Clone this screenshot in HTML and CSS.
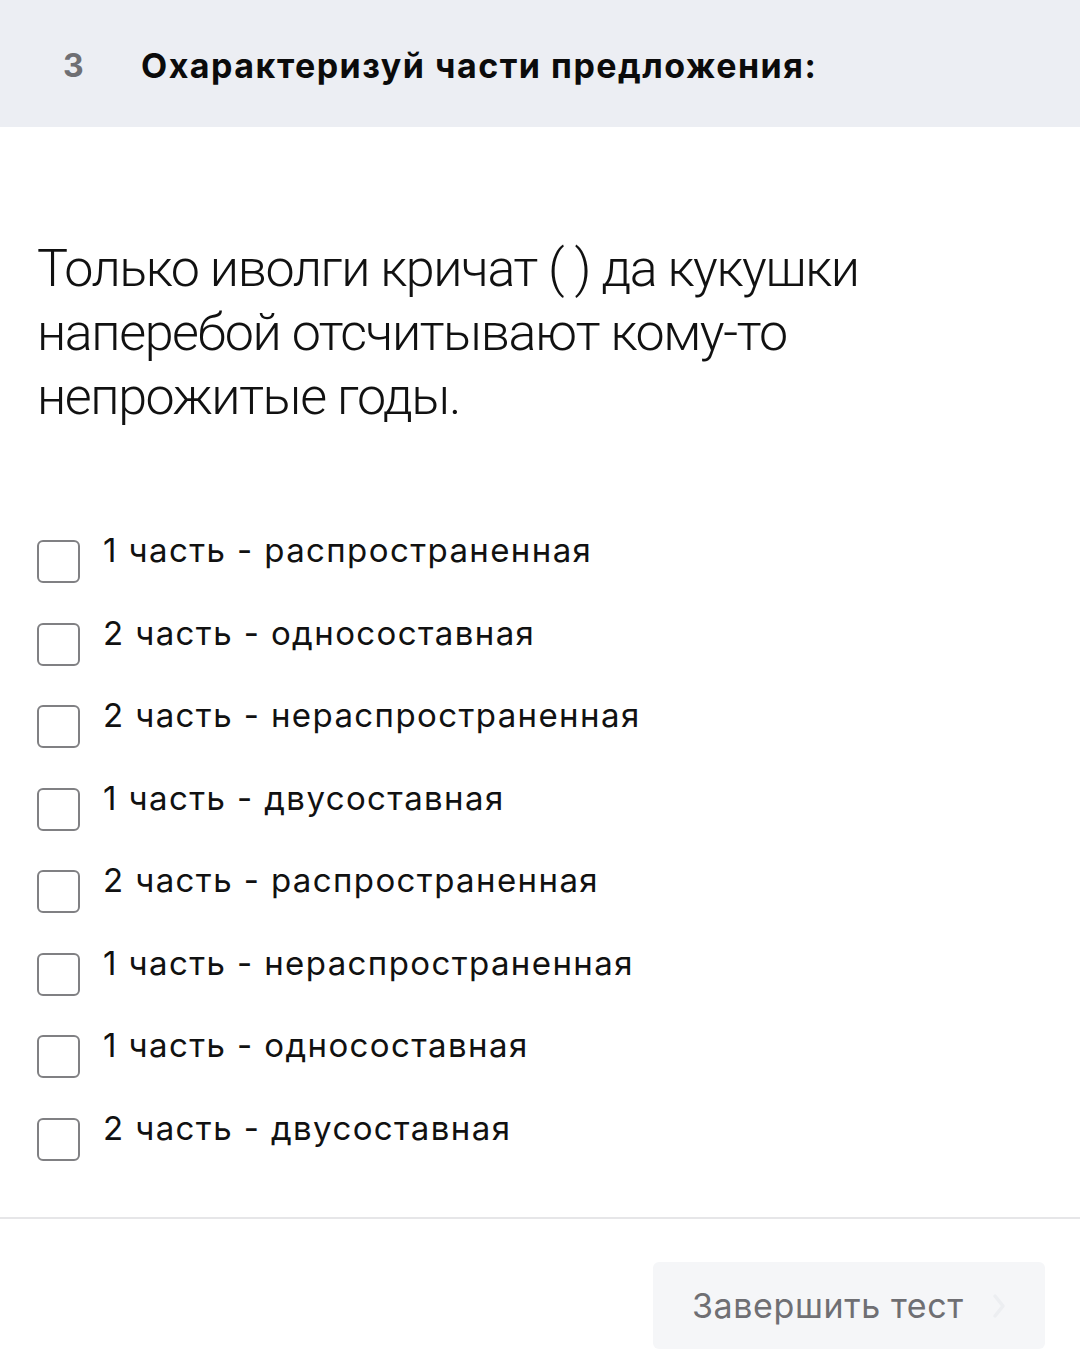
FILE: index.html
```html
<!DOCTYPE html>
<html lang="ru">
<head>
<meta charset="utf-8">
<link rel="stylesheet" href="styles.css">
</head>
<body>
<header class="head">
  <span class="num">3</span>
  <h1 class="title">Охарактеризуй части предложения:</h1>
</header>
<main class="content">
  <p class="question">Только иволги кричат ( ) да кукушки наперебой отсчитывают кому-то непрожитые годы.</p>
  <ul class="options">
    <li class="opt"><span class="box"></span><span class="label">1 часть - распространенная</span></li>
    <li class="opt"><span class="box"></span><span class="label">2 часть - односоставная</span></li>
    <li class="opt"><span class="box"></span><span class="label">2 часть - нераспространенная</span></li>
    <li class="opt"><span class="box"></span><span class="label">1 часть - двусоставная</span></li>
    <li class="opt"><span class="box"></span><span class="label">2 часть - распространенная</span></li>
    <li class="opt"><span class="box"></span><span class="label">1 часть - нераспространенная</span></li>
    <li class="opt"><span class="box"></span><span class="label">1 часть - односоставная</span></li>
    <li class="opt"><span class="box"></span><span class="label">2 часть - двусоставная</span></li>
  </ul>
</main>
<footer class="foot">
  <button class="finish">Завершить тест <svg class="chev" width="14" height="26" viewBox="0 0 14 26"><path d="M3 3 L11 13 L3 23" fill="none" stroke="#eceef1" stroke-width="3.5" stroke-linecap="round" stroke-linejoin="round"/></svg></button>
</footer>
</body>
</html>
```
FILE: styles.css
```css
* { box-sizing: border-box; }
html, body { margin: 0; padding: 0; background: #fff; }
body { font-family: Inter, "Noto Sans", sans-serif; color: #111; width: 1080px; }

.head {
  background: #eceef3;
  height: 127px;
  display: flex;
  align-items: center;
  padding-left: 63px;
  padding-top: 4px;
}
.num { font-size: 32px; font-weight: 700; color: #6f6f73; width: 78px; }
.title { margin: 0; font-size: 34px; font-weight: 700; color: #0b0b0b; letter-spacing: 1.5px; }

.content { padding: 110px 37px 0 37px; }
.question {
  margin: 0;
  font-family: Roboto, sans-serif;
  font-weight: 300;
  font-size: 52px;
  line-height: 64px;
  letter-spacing: -1.4px;
  color: #111;
  width: 880px;
}
.options { list-style: none; margin: 111px 0 0 0; padding: 0; display: flex; flex-direction: column; gap: 39.5px; }
.opt { display: flex; align-items: flex-start; height: 43px; }
.box {
  width: 43px; height: 43px;
  border: 2.5px solid #808083;
  border-radius: 6px;
  flex: none;
  margin-right: 23px;
}
.label { font-size: 33px; line-height: 33px; margin-top: -6px; color: #111; letter-spacing: 1.4px; }

.foot {
  margin-top: 56px;
  border-top: 2px solid #e6e6e8;
  display: flex;
  justify-content: flex-end;
  padding: 43px 35px 20px 0;
}
.finish {
  width: 392px; height: 87px;
  background: #f5f6f8;
  border: none;
  border-radius: 6px;
  font-family: Inter, "Noto Sans", sans-serif;
  font-size: 34px;
  letter-spacing: 0.6px;
  color: #6f6f73;
  display: flex; align-items: center;
  padding-left: 39px;
  gap: 28px;
}
.chev { margin-top: 2px; }
```
